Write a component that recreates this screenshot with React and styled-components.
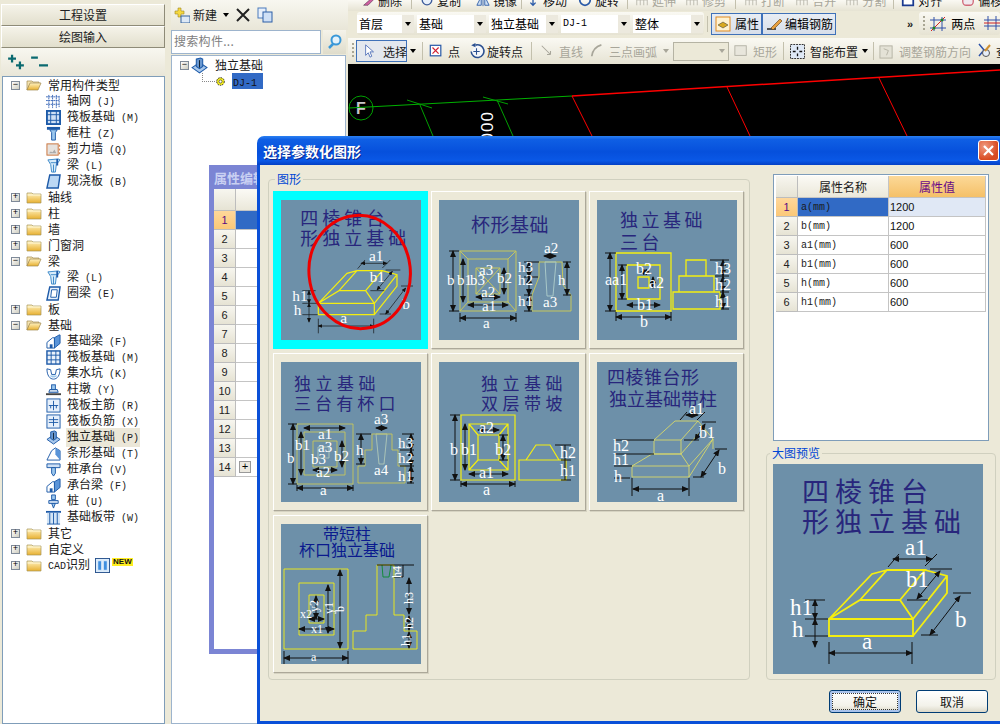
import React from "react";
import styled, { createGlobalStyle, css } from "styled-components";

const GlobalStyle = createGlobalStyle`
  html, body { margin: 0; padding: 0; background: #ece9d8; }
  body { font: 12px "Noto Sans CJK SC", "Liberation Sans", sans-serif; color: #000; }
  * { box-sizing: border-box; }
`;

const Hw = styled.span`
  font-family: "Liberation Mono", monospace;
  font-size: 10px;
`;

// half width latin like the bitmap font of the old app
const sim = (s) =>
  s.split(/([\x20-\x7e]+)/).map((p, i) =>
    /[\x20-\x7e]/.test(p) ? <Hw key={i}>{p}</Hw> : p
  );

const Page = styled.div`
  position: relative;
  display: flex;
  width: 1000px;
  height: 724px;
  overflow: hidden;
  background: #ece9d8;
`;

/* ---------- left side panel ---------- */

const SidePanel = styled.div`
  width: 165px;
  padding: 4px 0 0 1px;
  display: flex;
  flex-direction: column;
  flex: none;
`;

const NavButton = styled.div`
  width: 164px;
  height: 22px;
  display: flex;
  align-items: center;
  justify-content: center;
  padding-bottom: 2px;
  color: #222;
  border: 1px solid;
  border-color: #fff #8e8b78 #8e8b78 #fff;
  background: linear-gradient(#f5f3e9, #e2dfcd);
`;

const TreeTools = styled.div`
  height: 28px;
  display: flex;
  align-items: center;
  gap: 5px;
  padding-left: 6px;
  background: linear-gradient(#f8f7f0, #e9e6d8);
`;

const TreeBox = styled.div`
  width: 163px;
  margin-left: 1px;
  flex: 1;
  background: #fff;
  border: 1px solid #7f9db9;
`;

const dotV = (x, y, h) =>
  `repeating-linear-gradient(to bottom, #999 0 1px, transparent 1px 2px) ${x}px ${y}px / 1px ${h} no-repeat`;
const dotH = (x, w) =>
  `repeating-linear-gradient(to right, #999 0 1px, transparent 1px 2px) ${x}px 8px / ${w}px 1px no-repeat`;

const TreeRow = styled.div`
  height: 16px;
  display: flex;
  align-items: center;
  white-space: nowrap;
  padding-left: ${(p) => (p.$child ? 43 : 8)}px;
  background: ${(p) =>
    [
      p.$first
        ? dotV(12, "8px", "8px")
        : p.$end
        ? dotV(12, "0px", "8px")
        : dotV(12, "0px", "100%"),
      p.$child
        ? p.$lastChild
          ? dotV(31, "0px", "8px")
          : dotV(31, "0px", "100%")
        : null,
      p.$child ? dotH(31, 12) : dotH(12, 11),
    ]
      .filter(Boolean)
      .join(",")};
`;

const Expander = styled.span`
  width: 9px;
  height: 9px;
  flex: none;
  margin-right: ${(p) => p.$mr ?? 6}px;
  border: 1px solid #7f8a99;
  background: linear-gradient(135deg, #fff, #cfcdbf);
  display: flex;
  align-items: center;
  justify-content: center;
  font: 9px/7px "Liberation Mono", monospace;
  color: #000;
`;

const TreeLabel = styled.span`
  margin-left: ${(p) => p.$gap ?? 5}px;
  padding: 0 1px;
  background: ${(p) => (p.$active ? "#ebe7d8" : "transparent")};
  color: #1a1a1a;
  line-height: 16px;
`;

const CadMark = styled.span`
  margin-left: 4px;
  display: flex;
`;

const NewBadge = styled.span`
  font: bold 8px/8px "Liberation Sans", sans-serif;
  background: #ffee20;
  color: #111;
  padding: 0 1px;
  align-self: flex-start;
  margin-left: 2px;
  margin-top: 1px;
`;

const IconSvg = styled.svg`
  flex: none;
`;

const Icon = ({ children, size = 16, vb = 16 }) => (
  <IconSvg width={size} height={size} viewBox={`0 0 ${vb} ${vb}`}>
    {children}
  </IconSvg>
);

const Folder = ({ open }) => (
  <Icon>
    <defs>
      <linearGradient id="fld" x1="0" y1="0" x2="0" y2="1">
        <stop offset="0" stopColor="#fff2c0" />
        <stop offset="1" stopColor="#e8b030" />
      </linearGradient>
    </defs>
    {open ? (
      <>
        <path d="M1 4h5l1 1h6v2H4L1 13z" fill="#f4e3b0" stroke="#a08a50" strokeWidth=".7" />
        <path d="M1 13l3-7h11l-3 7z" fill="url(#fld)" stroke="#a08a50" strokeWidth=".7" />
      </>
    ) : (
      <>
        <path d="M1 4h5l1 1h8v9H1z" fill="url(#fld)" stroke="#a8955a" strokeWidth=".7" />
        <path d="M1.5 6h13" stroke="#fff8d8" />
      </>
    )}
  </Icon>
);

const B = "#1d5aa8";
const L = "#9cc8ee";
const treeIcons = {
  grid: (
    <path d="M3 1v14M7 1v14M11 1v14M0 3h14M0 7h14M0 11h14M14 2v12" stroke="#3a68b8" fill="none" strokeDasharray="2 .6" />
  ),
  raft: (
    <>
      <rect x="1" y="1" width="14" height="14" fill="#cfe0f4" stroke={B} strokeWidth="2" />
      <path d="M5 1v14M11 1v14M1 5h14M1 11h14" stroke={B} />
    </>
  ),
  column: (
    <>
      <rect x="1" y="1" width="14" height="3" fill={B} />
      <path d="M4 4h8l-2 3v8H6V7z" fill={L} stroke={B} />
    </>
  ),
  wall: (
    <>
      <rect x="1" y="2" width="12" height="12" fill="#e6e2de" stroke="#c87038" />
      <path d="M3 12l2-2 2 1 2-3 2 4z" fill="#aaa" />
      <path d="M14.500 3v11" stroke="#c87038" strokeDasharray="2 2" />
    </>
  ),
  beam: (
    <>
      <path d="M2 2l11-1 2 1-4 5-1 8H6L5 7z" fill="#d8ecfa" stroke="#3a88c8" />
      <path d="M5 5h7M8 7v8" stroke="#3a88c8" />
      <path d="M12 1v7" stroke={B} strokeWidth="2" />
    </>
  ),
  slab: (
    <path d="M4 1h11l-2 14H1z" fill="#bcd8f4" stroke={B} strokeWidth="1.500" />
  ),
  ring: (
    <>
      <path d="M4 1h11l-2 14H1z" fill="#eaf3fc" stroke={B} strokeWidth="1.500" />
      <path d="M6 4h6l-1 8H5z" fill="#fff" stroke={B} />
    </>
  ),
  footbeam: (
    <>
      <path d="M1 15V9l6-5h2v11z" fill="#fff" stroke={B} />
      <path d="M9 4l5-3h1v9l-6 5z" fill="#5a94d8" stroke={B} />
      <path d="M4 15v-4h3v4" fill={B} />
    </>
  ),
  raft2: (
    <>
      <rect x="1" y="1" width="14" height="14" fill="#eaf2fb" stroke={B} strokeWidth="1.500" />
      <path d="M5.500 1v14M10.500 1v14M1 5.500h14M1 10.500h14" stroke={B} />
    </>
  ),
  pit: (
    <>
      <path d="M1 3l4 1 1 5h4l1-5 4-1M1 3c0 7 3 11 7 11s7-4 7-11" fill="none" stroke={B} />
      <path d="M4 10c2 3 6 3 8 0z" fill={L} />
    </>
  ),
  pier: (
    <>
      <rect x="6" y="3" width="4" height="5" fill={L} stroke={B} />
      <path d="M4 8h8l1 3H3z" fill="#c8d8ea" stroke={B} />
      <path d="M0 13h16" stroke="#444" strokeWidth="2" />
    </>
  ),
  main: (
    <>
      <rect x="1" y="1" width="14" height="14" fill="#e6f0fb" stroke={B} />
      <path d="M8 3v10M3 8h10M5 8v3M11 8v3" stroke={B} />
    </>
  ),
  neg: (
    <>
      <rect x="1" y="1" width="14" height="14" fill="#e6f0fb" stroke={B} />
      <path d="M3 6h10M3 9h10M8 3v10" stroke={B} />
    </>
  ),
  iso: (
    <>
      <path d="M1 10l6-4h2l6 4-7 5z" fill="#a8c8ec" stroke={B} />
      <path d="M5 2l4-1 2 1v7l-3 2-3-2z" fill="#6a98d0" stroke={B} />
      <path d="M8 3v7" stroke="#123" />
    </>
  ),
  strip: (
    <>
      <path d="M1 15l5-10 4-3 5 3v10z" fill="#fff" stroke={B} />
      <path d="M10 2l5 3v10l-5-6z" fill="#5a94d8" />
    </>
  ),
  cap: (
    <>
      <path d="M1 2h14v4H1z" fill="#cfe0f4" stroke={B} />
      <path d="M6 6h4v6l-2 3-2-3z" fill={L} stroke={B} />
    </>
  ),
  pile: (
    <>
      <path d="M6 1h4v5H6zM6 10h4l-2 5z" fill={L} stroke={B} />
      <path d="M3 7h10v3H3z" fill="#cfe0f4" stroke={B} />
    </>
  ),
  band: (
    <>
      <path d="M0 2h16" stroke={B} strokeWidth="2" />
      <path d="M1 3h14v12H1z" fill="#d2e4f6" />
      <path d="M4 3v12M8 3v12M12 3v12M1 15h14" stroke={B} />
    </>
  ),
};

const leaf = (label, icon, active) => ({ label, icon, active });
const tree = [
  {
    label: "常用构件类型",
    open: true,
    kids: [
      leaf("轴网 (J)", "grid"),
      leaf("筏板基础 (M)", "raft"),
      leaf("框柱 (Z)", "column"),
      leaf("剪力墙 (Q)", "wall"),
      leaf("梁 (L)", "beam"),
      leaf("现浇板 (B)", "slab"),
    ],
  },
  { label: "轴线" },
  { label: "柱" },
  { label: "墙" },
  { label: "门窗洞" },
  { label: "梁", open: true, kids: [leaf("梁 (L)", "beam"), leaf("圈梁 (E)", "ring")] },
  { label: "板" },
  {
    label: "基础",
    open: true,
    kids: [
      leaf("基础梁 (F)", "footbeam"),
      leaf("筏板基础 (M)", "raft2"),
      leaf("集水坑 (K)", "pit"),
      leaf("柱墩 (Y)", "pier"),
      leaf("筏板主筋 (R)", "main"),
      leaf("筏板负筋 (X)", "neg"),
      leaf("独立基础 (P)", "iso", true),
      leaf("条形基础 (T)", "strip"),
      leaf("桩承台 (V)", "cap"),
      leaf("承台梁 (F)", "footbeam"),
      leaf("桩 (U)", "pile"),
      leaf("基础板带 (W)", "band"),
    ],
  },
  { label: "其它" },
  { label: "自定义" },
  { label: "CAD识别", cad: true },
];

const SideTree = () => (
  <TreeBox>
    {tree.map((n, i) => (
      <React.Fragment key={i}>
        <TreeRow $first={i === 0} $end={i === tree.length - 1}>
          <Expander>{n.open ? "−" : "+"}</Expander>
          <Folder open={n.open} />
          <TreeLabel>{sim(n.label)}</TreeLabel>
          {n.cad && (
            <>
              <CadMark>
                <Icon size={15}>
                  <rect x=".5" y=".5" width="15" height="15" fill="#dcecfb" stroke="#27508c" />
                  <path d="M3 3h4v10H3zM9 3h4v10H9z" fill="#3f8fe0" stroke="#fff" strokeWidth=".6" />
                </Icon>
              </CadMark>
              <NewBadge>NEW</NewBadge>
            </>
          )}
        </TreeRow>
        {n.kids &&
          n.kids.map((k, j) => (
            <TreeRow key={j} $child $lastChild={j === n.kids.length - 1}>
              <Icon size={15}>{treeIcons[k.icon]}</Icon>
              <TreeLabel $active={k.active}>{sim(k.label)}</TreeLabel>
            </TreeRow>
          ))}
      </React.Fragment>
    ))}
  </TreeBox>
);

/* ---------- component list panel ---------- */

const ListPanel = styled.div`
  width: 183px;
  flex: none;
  padding-left: 6px;
  display: flex;
  flex-direction: column;
  background: #ece9d8;
`;

const ListTools = styled.div`
  height: 30px;
  padding: 0 0 1px 3px;
  display: flex;
  align-items: center;
  background: linear-gradient(#f8f7f0, #e9e6d8);
`;

const SearchRow = styled.div`
  height: 25px;
  display: flex;
  width: 175px;
  gap: 2px;
`;

const SearchInput = styled.div`
  width: 150px;
  height: 24px;
  padding: 0 0 3px 2px;
  display: flex;
  align-items: center;
  color: #808080;
  letter-spacing: 0.3px;
  background: #fff;
  border: 1px solid #9db4cd;
`;

const SearchButton = styled.div`
  width: 23px;
  height: 24px;
  display: flex;
  align-items: center;
  justify-content: center;
  background: linear-gradient(#f5f3ea, #dfdccb);
`;

const ListTree = styled.div`
  flex: 1;
  width: 175px;
  background: #fff;
  border: 1px solid #9db4cd;
  padding: 1px 0 0 8px;
`;

const ListRow = styled.div`
  height: 16px;
  display: flex;
  align-items: center;
  white-space: nowrap;
`;

const Selected = styled.span`
  display: inline-block;
  height: 16px;
  width: 31px;
  margin-left: 6px;
  line-height: 15px;
  padding-left: 1px;
  background: #316ac5;
  color: #111;
`;

const Connector = styled.span`
  width: 13px;
  height: 9px;
  margin-left: 22px;
  margin-top: -8px;
  border-left: 1px dotted #888;
  border-bottom: 1px dotted #888;
`;

/* ---------- workspace ---------- */

const Workspace = styled.div`
  flex: 1;
  min-width: 0;
  display: flex;
  flex-direction: column;
`;

const barBg = css`
  background: linear-gradient(#faf9f3, #e6e3d3);
`;

const CutBar = styled.div`
  height: 11px;
  overflow: hidden;
  flex: none;
  ${barBg};
`;

const CutInner = styled.div`
  margin-top: -12px;
  height: 24px;
  display: flex;
  align-items: center;
  white-space: nowrap;
  padding-left: 13px;
`;

const CutTool = styled.span`
  display: flex;
  align-items: center;
  gap: 3px;
  flex: none;
  margin-right: ${(p) => p.$mr ?? 0}px;
  color: ${(p) => (p.$off ? "#a8a69a" : "#111")};
`;

const Sep = styled.span`
  width: 1px;
  height: ${(p) => p.$h ?? 18}px;
  flex: none;
  background: #c3c0ad;
  margin: 0 ${(p) => p.$m ?? 6}px;
`;

const ComboBar = styled.div`
  height: 27px;
  flex: none;
  display: flex;
  align-items: center;
  padding: 0 0 2px 9px;
`;

const ComboGroup = styled.div`
  height: 23px;
  width: 347px;
  flex: none;
  display: flex;
  align-items: center;
  gap: 3px;
  border-radius: 3px;
  ${barBg};
`;

const Combo = styled.div`
  width: ${(p) => p.$w}px;
  height: 18px;
  flex: none;
  display: flex;
  align-items: center;
  justify-content: space-between;
  padding-left: 2px;
  background: #fff;
  ${(p) =>
    p.$off &&
    css`
      height: 19px;
      margin-left: 4px;
      background: #ece9d8;
      border: 1px solid #b5b3a3;
    `}
`;

const ComboArrow = styled.span`
  width: 12px;
  height: 100%;
  display: flex;
  align-items: center;
  justify-content: center;
  background: ${(p) => (p.$off ? "transparent" : "#ece9de")};
`;

const Caret = styled.span`
  display: inline-block;
  width: 0;
  height: 0;
  flex: none;
  border: 3px solid transparent;
  border-bottom: 0;
  border-top: 4px solid ${(p) => (p.$off ? "#a8a69a" : "#000")};
`;

const ToggleButton = styled.div`
  height: 22px;
  width: ${(p) => p.$w}px;
  flex: none;
  display: flex;
  align-items: center;
  gap: ${(p) => p.$gap ?? 4}px;
  padding-left: 3px;
  white-space: nowrap;
  border: 1px solid #3f71b8;
  background: linear-gradient(#e8edf4, #d7deea);
`;

const Chevrons = styled.span`
  flex: none;
  margin-left: 71px;
  font: bold 11px "Liberation Sans", sans-serif;
  color: #1a1a1a;
`;

const EndGroup = styled.div`
  height: 23px;
  margin-left: 6px;
  flex: 1;
  display: flex;
  align-items: center;
  gap: 5px;
  padding-left: 4px;
  overflow: hidden;
  white-space: nowrap;
  border-radius: 3px;
  ${barBg};
`;

const EndTool = styled.span`
  margin-left: 4px;
  display: flex;
  gap: 4px;
`;

const Grip = styled.span`
  width: 2px;
  height: 16px;
  flex: none;
  background: repeating-linear-gradient(to bottom, #a9a694 0 2px, transparent 2px 4px);
`;

const ToolBar = styled.div`
  height: 26px;
  flex: none;
  display: flex;
  align-items: center;
  padding-left: 4px;
  white-space: nowrap;
  overflow: hidden;
  ${barBg};
`;

const Tool = styled.span`
  display: flex;
  align-items: center;
  gap: ${(p) => p.$gap ?? 5}px;
  flex: none;
  margin-left: ${(p) => p.$ml ?? 0}px;
  color: ${(p) => (p.$off ? "#a8a69a" : "#1a1a1a")};
`;

const PickButton = styled(Tool)`
  width: 51px;
  height: 22px;
  padding-left: 6px;
  gap: 6px;
  border: 1px solid #3f71b8;
  background: #e4e8ee;
`;

const CanvasArea = styled.div`
  flex: 1;
  background: #000;
`;

const CanvasSvg = styled.svg`
  display: block;
`;

const Canvas = () => (
  <CanvasArea>
    <CanvasSvg width="652" height="80">
      <circle cx="13" cy="44" r="12" fill="none" stroke="#00a000" />
      <text x="8" y="50" fill="#c8c8c8" fontFamily="Liberation Sans" fontWeight="bold" fontSize="16">F</text>
      <path d="M1 44 L224 32" stroke="#00b000" fill="none" />
      <path d="M59 36 L84 44 M72 41 L85 72 M135 33 L160 40 M149 36 L165 72" stroke="#00a000" fill="none" />
      <path d="M224 32 L652 6" stroke="#ff0000" strokeWidth="1.500" fill="none" />
      <path d="M224 32 L244 72 M379 23 L402 72 M531 14 L559 72" stroke="#ff0000" fill="none" />
      <text x="0" y="0" transform="translate(133,48) rotate(90)" fill="#fff" fontFamily="Liberation Sans" fontSize="17" letterSpacing="1">000</text>
    </CanvasSvg>
  </CanvasArea>
);

/* ---------- property window behind the dialog ---------- */

const PropWindow = styled.div`
  position: absolute;
  left: 209px;
  top: 165px;
  width: 80px;
  height: 489px;
  padding: 0 0 5px 5px;
  display: flex;
  flex-direction: column;
  background: #7b85d4;
`;

const PropTitle = styled.div`
  height: 24px;
  display: flex;
  align-items: center;
  font-weight: bold;
  font-size: 13px;
  color: #c9d0f2;
  white-space: nowrap;
`;

const PropBody = styled.div`
  flex: 1;
  background: #fff;
`;

const RowHead = styled.div`
  width: 22px;
  flex: none;
  display: flex;
  align-items: center;
  justify-content: center;
  font-family: "Liberation Sans", sans-serif;
  font-size: 11px;
  color: ${(p) => (p.$on ? "#5a0a80" : "#222")};
  background: ${(p) =>
    p.$on ? "linear-gradient(#ffd79a, #fbc878)" : "linear-gradient(#f7f6ef, #e6e3d4)"};
  border-right: 1px solid #bdbdbd;
  border-bottom: 1px solid #bdbdbd;
`;

const GridRow = styled.div`
  height: ${(p) => p.$h ?? 19}px;
  display: flex;
`;

const PropCell = styled.div`
  flex: 1;
  display: flex;
  align-items: center;
  padding-left: 3px;
  background: ${(p) => (p.$on ? "#316ac5" : p.$head ? "linear-gradient(#fbfaf5, #ebe8da)" : "#fff")};
  border-bottom: 1px solid #c4c4c4;
`;

const PlusBox = styled.span`
  width: 12px;
  height: 12px;
  display: flex;
  align-items: center;
  justify-content: center;
  font: 11px/11px "Liberation Mono", monospace;
  background: #ece9e0;
  border: 1px solid #999;
`;

/* ---------- dialog ---------- */

const Dialog = styled.div`
  position: absolute;
  left: 257px;
  top: 136px;
  width: 746px;
  height: 588px;
  display: flex;
  flex-direction: column;
  border-radius: 7px 0 0 0;
  overflow: hidden;
`;

const DialogTitle = styled.div`
  height: 29px;
  flex: none;
  display: flex;
  align-items: center;
  justify-content: space-between;
  padding: 0 4px 0 6px;
  font-weight: bold;
  font-size: 14px;
  color: #fff;
  text-shadow: 1px 1px 0 #0a2a90;
  background: linear-gradient(#2b80f2 0, #0f5fe4 12%, #0650dc 55%, #0a58e6 85%, #0440c4 100%);
`;

const CloseButton = styled.div`
  width: 21px;
  height: 21px;
  display: flex;
  align-items: center;
  justify-content: center;
  border: 1px solid #fff;
  border-radius: 3px;
  background: radial-gradient(circle at 30% 30%, #f09a80, #d84a20 70%);
`;

const DialogBody = styled.div`
  flex: 1;
  min-height: 0;
  display: flex;
  padding: 8px 0 0 8px;
  background: #ece9d8;
  border: 3px solid #0a50d8;
  border-top: 0;
`;

const Group = styled.fieldset`
  margin: 0;
  padding: ${(p) => p.$pad};
  width: ${(p) => p.$w}px;
  height: ${(p) => p.$h}px;
  flex: none;
  border: 1px solid #d0d0bf;
  border-radius: 4px;
  min-width: 0;
`;

const GroupLegend = styled.legend`
  padding: 0 2px;
  margin-left: ${(p) => p.$ml}px;
  line-height: 12px;
  font-size: 12px;
  color: #0046d5;
`;

const ThumbGrid = styled.div`
  display: grid;
  grid-template-columns: repeat(3, 155px);
  grid-auto-rows: 158px;
  gap: 4px 3px;
`;

const Thumb = styled.div`
  display: flex;
  align-items: center;
  justify-content: center;
  background: ${(p) => (p.$on ? "#00ffff" : "#ece9d8")};
  ${(p) =>
    !p.$on &&
    css`
      border: 1px solid;
      border-color: #fff #aca899 #aca899 #fff;
      box-shadow: 1px 1px 0 #d6d3c2;
    `}
`;

const Shot = styled.svg`
  display: block;
  flex: none;
  background: #6d90a9;
  overflow: hidden;
`;

const SideColumn = styled.div`
  margin-left: 16px;
  width: 230px;
  flex: none;
  display: flex;
  flex-direction: column;
`;

const AttrBox = styled.div`
  margin: 1px 0 6px 7px;
  width: 216px;
  height: 267px;
  padding: 1px 2px;
  background: #fff;
  border: 1px solid #7f9db9;
`;

const AttrName = styled.div`
  width: 91px;
  flex: none;
  display: flex;
  align-items: center;
  justify-content: ${(p) => (p.$head ? "center" : "flex-start")};
  padding-left: ${(p) => (p.$head ? 0 : 3)}px;
  color: #1a1a1a;
  background: ${(p) =>
    p.$on ? "#316ac5" : p.$head ? "linear-gradient(#fbfaf5, #ebe8da)" : "#fff"};
  border-right: 1px solid #c4c4c4;
  border-bottom: 1px solid #c4c4c4;
`;

const AttrValue = styled.div`
  flex: 1;
  display: flex;
  align-items: center;
  justify-content: ${(p) => (p.$head ? "center" : "flex-start")};
  padding-left: ${(p) => (p.$head ? 0 : 1)}px;
  font-family: ${(p) => (p.$head ? "inherit" : '"Liberation Sans", sans-serif')};
  font-size: ${(p) => (p.$head ? 12 : 11)}px;
  color: ${(p) => (p.$head ? "#6a0a88" : "#111")};
  background: ${(p) =>
    p.$head ? "linear-gradient(#fcd998, #f5c068)" : p.$on ? "#e0e8f5" : "#fff"};
  border-right: 1px solid #c4c4c4;
  border-bottom: 1px solid #c4c4c4;
`;

const Footer = styled.div`
  display: flex;
  justify-content: flex-end;
  gap: 15px;
  padding-right: 8px;
  margin-top: 10px;
`;

const PushButton = styled.div`
  width: 72px;
  height: 23px;
  display: flex;
  align-items: center;
  justify-content: center;
  border: 1px solid #003c74;
  border-radius: 3px;
  color: #111;
  background: linear-gradient(#fff, #f3f2ea 70%, #dcd8c8);
  ${(p) =>
    p.$def &&
    css`
      box-shadow: inset 0 0 0 2px #a9c3ec;
      outline: 1px dotted #333;
      outline-offset: -4px;
    `}
`;

/* ---------- diagrams ---------- */

const Y = "#f4ee10";
const O = "#c6c65c";

const preview = {
  vb: 210,
  titles: [
    { t: "四棱锥台", x: 29, y: 38, s: 27, ls: 6 },
    { t: "形独立基础", x: 29, y: 68, s: 27, ls: 6 },
  ],
  sw: 1.8,
  shapes: [
    [Y, "M56 155H140V172H56Z M56 155L87 136H127L140 155 M87 136L114 106H152L127 136 M56 155L99 110L114 106 M140 172L174 129V112L152 106 M140 155L174 112"],
  ],
  dims: [
    [120, 95, 159, 95],
    [167, 107, 144, 135],
    [187, 132, 157, 171],
    [42, 136, 42, 155],
    [42, 155, 42, 183],
    [56, 189, 139, 189],
  ],
  ticks: "M115 103L126 90 M152 102L164 90 M157 105H179 M134 136H155 M180 129H198 M148 171H165 M32 136H52 M32 155H55 M32 172H55 M56 178V200 M139 178V200",
  labels: [
    ["a1", 132, 91],
    ["b1", 133, 123],
    ["b", 182, 163],
    ["h1", 17, 151],
    ["h", 19, 173],
    ["a", 89, 185],
  ],
  ls: 23,
};

const cup = {
  vb: 140,
  titles: [{ t: "杯形基础", x: 32, y: 32, s: 19, ls: 0.5 }],
  shapes: [
    [O, "M21 51H77V111H21Z M29 59H69V102H29Z M37 68H61V94H37Z M21 51L29 59 M77 51L69 59 M21 111L29 102 M77 111L69 102 M37 68L61 94 M61 68L37 94"],
    [O, "M100 62H123L124 85L132 95V111H93V95L100 77Z"],
    ["#a8c8c8", "M106 62H117L114 96H108Z"],
  ],
  dims: [[14, 51, 14, 111], [24, 59, 24, 102], [65, 68, 65, 94], [21, 118, 77, 118], [29, 105, 69, 105], [37, 97, 61, 97], [105, 56, 117, 56], [90, 62, 90, 77], [90, 77, 90, 95], [90, 95, 90, 111], [128, 62, 128, 95]],
  ticks: "M10 51H20 M10 111H20 M85 62H100 M85 77H99 M85 95H93 M85 111H93 M124 62H132 M124 95H132 M21 113V122 M77 113V122",
  labels: [["a2", 105, 53], ["h3", 79, 72], ["h2", 79, 85], ["h1", 79, 106], ["h", 119, 85], ["a3", 104, 107], ["a", 44, 128], ["a1", 43, 111], ["a2", 42, 97], ["a3", 40, 75], ["b", 8, 85], ["b1", 18, 85], ["b3", 31, 85], ["b2", 58, 83]],
  ls: 15,
};

const triple = {
  vb: 140,
  titles: [
    { t: "独立基础", x: 23, y: 27, s: 18, ls: 3.500 },
    { t: "三台", x: 23, y: 49, s: 18, ls: 3.500 },
  ],
  sw: 1.3,
  shapes: [[Y, "M19 53H74V111H19Z M30 65H63V99H30Z M41 77H52V88H41Z M89 60H109V76H89Z M82 76H117V92H82Z M76 92H123V109H76Z"]],
  dims: [[13, 53, 13, 111], [25, 65, 25, 99], [30, 105, 63, 105], [19, 117, 74, 117], [44, 72, 52, 72], [56, 77, 56, 88], [126, 60, 126, 76], [126, 76, 126, 92], [126, 92, 126, 109]],
  ticks: "M8 53H19 M8 111H19 M21 65H30 M21 99H30 M19 112V121 M74 112V121 M113 60H132 M118 76H132 M123 92H132 M124 109H132",
  labels: [["aa1", 8, 85], ["b2", 39, 74], ["a2", 52, 88], ["b1", 40, 110], ["b", 43, 127], ["h3", 118, 74], ["h2", 118, 90], ["h1", 118, 107]],
  ls: 16,
};

const tripleCup = {
  vb: 140,
  titles: [
    { t: "独立基础", x: 13, y: 28, s: 17, ls: 4.500 },
    { t: "三台有杯口", x: 13, y: 48, s: 17, ls: 4.100 },
  ],
  sw: 0.9,
  shapes: [
    [O, "M16 62H72V122H16Z M23 70H64V113H23Z M32 79H56V105H32Z"],
    ["#b0c8b8", "M37 85H48V96H37Z M95 72H106L103 102H98Z"],
    [O, "M91 72H111V88H117V104H124V121H77V104H84V88H91Z"],
  ],
  dims: [[12, 62, 12, 122], [20, 70, 20, 113], [61, 79, 61, 105], [23, 66, 64, 66], [32, 108, 56, 108], [16, 126, 72, 126], [95, 66, 106, 66], [80, 72, 80, 102], [130, 72, 130, 88], [130, 88, 130, 104], [130, 104, 130, 121]],
  ticks: "M7 62H16 M7 122H16 M75 72H90 M75 102H84 M121 72H133 M119 88H133 M119 104H133 M126 121H133 M16 123V129 M72 123V129",
  labels: [["b1", 14, 88], ["b", 6, 101], ["a1", 37, 77], ["a3", 37, 90], ["b3", 30, 102], ["b2", 53, 99], ["a2", 35, 115], ["a", 39, 133], ["a3", 93, 62], ["h", 75, 93], ["a4", 93, 113], ["h3", 117, 86], ["h2", 117, 101], ["h1", 117, 119]],
  ls: 15,
};

const doubleSlope = {
  vb: 140,
  titles: [
    { t: "独立基础", x: 42, y: 28, s: 17, ls: 4.500 },
    { t: "双层带坡", x: 42, y: 48, s: 17, ls: 4.500 },
  ],
  sw: 1.2,
  shapes: [[Y, "M22 53H76V118H22Z M30 62H69V108H30Z M39 73H60V98H39Z M30 62L39 73 M69 62L60 73 M30 108L39 98 M69 108L60 98 M80 98H127V118H80Z M87 98L97 83H111L120 98"]],
  dims: [[16, 53, 16, 118], [26, 62, 26, 108], [64, 73, 64, 98], [39, 68, 60, 68], [30, 112, 69, 112], [22, 122, 76, 122]],
  ticks: "M11 53H21 M11 118H21 M60 73H69 M60 98H69 M22 119V125 M76 119V125 M116 83H132 M122 98H132 M122 118H132 M126 83V118",
  labels: [["b", 11, 93], ["b1", 22, 93], ["a2", 40, 71], ["b2", 56, 93], ["a1", 40, 116], ["a", 44, 133], ["h2", 121, 96], ["h1", 121, 114]],
  ls: 16,
};

const pedestal = {
  vb: 140,
  titles: [
    { t: "四棱锥台形", x: 10, y: 22, s: 18, ls: 0.500 },
    { t: "独立基础带柱", x: 12, y: 44, s: 18, ls: 0 },
  ],
  sw: 0.9,
  shapes: [["#d8d86a", "M35 104H92V115H35Z M57 78H84V92H57Z M57 78L78 59H101L84 78 M35 104L55 92H84L92 104 M92 115L116 77L101 59 M92 104L116 77V87 M84 92L103 70"]],
  dims: [[89, 53, 101, 53], [108, 62, 98, 78], [122, 88, 104, 115], [36, 127, 91, 127]],
  ticks: "M83 58L90 50 M100 58L108 50 M105 60H119 M87 78H102 M118 87H130 M96 115H107 M35 116V134 M92 116V134 M17 78H57 M17 92H57 M17 104H35 M17 116H33",
  labels: [["a1", 92, 52], ["b1", 102, 76], ["b", 121, 112], ["h2", 16, 89], ["h1", 16, 103], ["h", 17, 120], ["a", 60, 139]],
  ls: 16,
};

const shortCol = {
  vb: 140,
  titles: [
    { t: "带短柱", x: 42, y: 16, s: 16, ls: 0, c: "#0a1a8e" },
    { t: "杯口独立基础", x: 18, y: 32, s: 16, ls: 0, c: "#0a1a8e" },
  ],
  sw: 0.9,
  shapes: [
    [Y, "M3 45H67V125H3Z M18 59H53V111H18Z M28 71H43V99H28Z M72 107H85V91H96V41H113V91H123V107H136V125H72Z"],
    ["#0a8a30", "M101 41L102 53H108L110 41"],
  ],
  dims: [[59, 46, 59, 124], [47, 61, 47, 109], [35, 72, 35, 95], [3, 134, 67, 134], [18, 105, 53, 105], [28, 95, 43, 95], [128, 54, 128, 90], [128, 92, 128, 106], [128, 108, 128, 124]],
  ticks: "M3 127V140 M67 127V140 M96 41H133 M113 53H122 M122 41V53",
  labels: [["a", 30, 137], ["x1", 30, 109], ["x2", 19, 94], ["y2", 37, 88, 0, -90], ["y1", 52, 90, 0, -90], ["b", 63, 88, 0, -90], ["h4", 120, 54, 0, -90], ["h3", 132, 80, 0, -90], ["h2", 132, 105, 0, -90], ["h1", 129, 122, 0, -90]],
  ls: 12,
};

const Diagram = ({ data, size, children }) => (
  <Shot width={size} height={size} viewBox={`0 0 ${data.vb} ${data.vb}`}>
    <defs>
      <marker id="ah" markerUnits="userSpaceOnUse" markerWidth="7" markerHeight="6" refX="6" refY="3" orient="auto-start-reverse">
        <path d="M0 0L7 3L0 6Z" fill="#111" />
      </marker>
    </defs>
    {data.titles.map((t, i) => (
      <text key={i} x={t.x} y={t.y} fontSize={t.s} letterSpacing={t.ls} fill={t.c || "#28267c"} fontFamily='"Noto Sans CJK SC", sans-serif'>
        {t.t}
      </text>
    ))}
    {data.shapes.map(([c, d], i) => (
      <path key={i} d={d} fill="none" stroke={c} strokeWidth={data.sw || 1} />
    ))}
    <path d={data.ticks} fill="none" stroke="#111" strokeWidth="1" />
    {data.dims.map(([a, b, c, d], i) => (
      <line key={i} x1={a} y1={b} x2={c} y2={d} stroke="#111" strokeWidth="1" markerStart="url(#ah)" markerEnd="url(#ah)" />
    ))}
    {data.labels.map(([t, x, y, s, r], i) => (
      <text key={i} x={x} y={y} fontSize={s || data.ls} fill="#fff" fontFamily='"Liberation Serif", serif' transform={r ? `rotate(${r} ${x} ${y})` : undefined}>
        {t}
      </text>
    ))}
    {children}
  </Shot>
);

const attrs = [
  ["a(mm)", "1200"],
  ["b(mm)", "1200"],
  ["a1(mm)", "600"],
  ["b1(mm)", "600"],
  ["h(mm)", "600"],
  ["h1(mm)", "600"],
];

const ChooseDialog = () => (
  <Dialog>
    <DialogTitle>
      选择参数化图形
      <CloseButton>
        <svg width="13" height="13" viewBox="0 0 13 13">
          <path d="M2 2L11 11M11 2L2 11" stroke="#fff" strokeWidth="2.200" />
        </svg>
      </CloseButton>
    </DialogTitle>
    <DialogBody>
      <Group $w={482} $h={507} $pad="6px 0 0 4px">
        <GroupLegend $ml={2}>图形</GroupLegend>
        <ThumbGrid>
          <Thumb $on>
            <Diagram data={preview} size={140}>
              <ellipse cx="118" cy="108" rx="76" ry="85" fill="none" stroke="#ee0000" strokeWidth="4.500" transform="rotate(-6 118 108)" />
            </Diagram>
          </Thumb>
          <Thumb><Diagram data={cup} size={140} /></Thumb>
          <Thumb><Diagram data={triple} size={140} /></Thumb>
          <Thumb><Diagram data={tripleCup} size={140} /></Thumb>
          <Thumb><Diagram data={doubleSlope} size={140} /></Thumb>
          <Thumb><Diagram data={pedestal} size={140} /></Thumb>
          <Thumb><Diagram data={shortCol} size={140} /></Thumb>
        </ThumbGrid>
      </Group>
      <SideColumn>
        <AttrBox>
          <GridRow $h={22}>
            <RowHead />
            <AttrName $head>属性名称</AttrName>
            <AttrValue $head>属性值</AttrValue>
          </GridRow>
          {attrs.map(([n, v], i) => (
            <GridRow key={n}>
              <RowHead $on={i === 0}>{i + 1}</RowHead>
              <AttrName $on={i === 0}>
                <Hw>{n}</Hw>
              </AttrName>
              <AttrValue $on={i === 0}>{v}</AttrValue>
            </GridRow>
          ))}
        </AttrBox>
        <Group $w={230} $h={233} $pad="5px 0 0 6px">
          <GroupLegend $ml={-3}>大图预览</GroupLegend>
          <Diagram data={preview} size={210} />
        </Group>
        <Footer>
          <PushButton $def>确定</PushButton>
          <PushButton>取消</PushButton>
        </Footer>
      </SideColumn>
    </DialogBody>
  </Dialog>
);

const cutIcons = {
  brush: <path d="M3 14l9-8 2 2-6 6z" fill="#d060a0" stroke="#402040" strokeWidth=".6" />,
  copy: <circle cx="8" cy="8" r="5.500" fill="#e8f0fa" stroke="#3a5a9a" strokeWidth="1.500" />,
  mirror: <path d="M1 14L6 4v10zM15 14L10 4v10zM8 2v13" fill="#cfe0f4" stroke="#2a5aa8" />,
  move: <path d="M8 1v13M5 11l3 3 3-3" fill="none" stroke="#2a5aa8" strokeWidth="1.500" />,
  rotate: <path d="M2 8a6 6 0 0 0 12 0" fill="none" stroke="#2a5aa8" strokeWidth="2" />,
  off: <path d="M2 14V8h12v6M6 8v6M10 8v6" fill="none" stroke="#b8b6aa" />,
  align: <path d="M2 2h12v12H2z" fill="#fff" stroke="#1a3a90" strokeWidth="2" />,
  offset: <rect x="2" y="1" width="12" height="13" rx="4" fill="#f0e8ee" stroke="#d06878" strokeWidth="1.500" />,
};

// text, icon, gap to the next tool, separator in that gap
const cutTools = [
  ["删除", "brush", 18, true],
  ["复制", "copy", 15],
  ["镜像", "mirror", 9, true],
  ["移动", "move", 11],
  ["旋转", "rotate", 16, true],
  ["延伸", "off", 9],
  ["修剪", "off", 18, true],
  ["打断", "off", 10],
  ["合并", "off", 9],
  ["分割", "off", 15, true],
  ["对齐", "align", 19],
  ["偏移", "offset", 0],
];

export default function App() {
  return (
    <Page>
      <GlobalStyle />
      <SidePanel>
        <NavButton>工程设置</NavButton>
        <NavButton>绘图输入</NavButton>
        <TreeTools>
          <Icon size={18}>
            <path d="M1 5h7M4.500 1.500v7M8 11h7M11.500 7.500v7" stroke="#0b6a70" strokeWidth="2" fill="none" />
          </Icon>
          <Icon size={18}>
            <path d="M1 4h6M8 11h8" stroke="#0b6a70" strokeWidth="2" fill="none" />
          </Icon>
        </TreeTools>
        <SideTree />
      </SidePanel>

      <ListPanel>
        <ListTools>
          <Icon size={16}>
            <path d="M1 4h3V1h3v3h3v3H7v3H4V7H1z" fill="#f5d840" stroke="#a08820" strokeWidth=".6" />
            <rect x="7" y="9" width="9" height="7" fill="#dce8f6" stroke="#33609c" />
          </Icon>
          <Tool $ml={3}>新建</Tool>
          <Tool $ml={6}><Caret /></Tool>
          <Tool $ml={7}>
            <Icon size={14} vb={14}>
              <path d="M1 1L13 13M13 1L1 13" stroke="#222" strokeWidth="2" />
            </Icon>
          </Tool>
          <Tool $ml={7}>
            <Icon size={16}>
              <rect x="1" y="1" width="8" height="10" fill="#e8f0fb" stroke="#4a7abc" />
              <rect x="6" y="5" width="9" height="10" fill="#cfe0f6" stroke="#2c5ea6" />
            </Icon>
          </Tool>
        </ListTools>
        <SearchRow>
          <SearchInput>搜索构件...</SearchInput>
          <SearchButton>
            <Icon size={16}>
              <circle cx="9" cy="6" r="4.500" fill="#e4f2fb" stroke="#3a98d8" strokeWidth="2" />
              <path d="M6 10L2 14" stroke="#3a98d8" strokeWidth="2.500" />
            </Icon>
          </SearchButton>
        </SearchRow>
        <ListTree>
          <ListRow>
            <Expander $mr={2}>−</Expander>
            <Icon size={17}>{treeIcons.iso}</Icon>
            <TreeLabel $gap={6}>独立基础</TreeLabel>
          </ListRow>
          <ListRow>
            <Connector />
            <Icon size={11} vb={11}>
              <circle cx="5.500" cy="5.500" r="3.800" fill="#f6ee20" stroke="#222" strokeDasharray="1.500 1" />
              <circle cx="5.500" cy="5.500" r="1.500" fill="#fff" stroke="#222" strokeWidth=".6" />
            </Icon>
            <Selected><Hw>DJ-1</Hw></Selected>
          </ListRow>
        </ListTree>
      </ListPanel>

      <Workspace>
        <CutBar>
          <CutInner>
            {cutTools.map(([t, ic, gap, sep]) => (
              <React.Fragment key={t}>
                <CutTool $off={ic === "off"} $mr={sep ? 0 : gap}>
                  <Icon size={14}>{cutIcons[ic]}</Icon>
                  {t}
                </CutTool>
                {sep && <Sep $m={(gap - 1) / 2} />}
              </React.Fragment>
            ))}
          </CutInner>
        </CutBar>

        <ComboBar>
          <ComboGroup>
            <Combo $w={57}>首层<ComboArrow><Caret /></ComboArrow></Combo>
            <Combo $w={69}>基础<ComboArrow><Caret /></ComboArrow></Combo>
            <Combo $w={69}>独立基础<ComboArrow><Caret /></ComboArrow></Combo>
            <Combo $w={69}><Hw>DJ-1</Hw><ComboArrow><Caret /></ComboArrow></Combo>
            <Combo $w={70}>整体<ComboArrow><Caret /></ComboArrow></Combo>
          </ComboGroup>
          <Sep $h={16} $m={3} />
          <ToggleButton $w={51}>
            <Icon size={16}>
              <rect x="1" y="1" width="14" height="14" fill="#fff2d0" stroke="#e08a20" />
              <path d="M3 9l5-3 5 3-5 3z" fill="#d8a820" stroke="#333" strokeWidth=".5" />
            </Icon>
            属性
          </ToggleButton>
          <ToggleButton $w={74} $gap={3}>
            <Icon size={16}>
              <path d="M1 13h9" stroke="#222" strokeWidth="1.500" />
              <path d="M5 12L14 3l2 2-9 9z" fill="#e8a040" stroke="#5a3a10" strokeWidth=".6" />
            </Icon>
            编辑钢筋
          </ToggleButton>
          <Chevrons>»</Chevrons>
          <EndGroup>
            <Grip />
            <Icon size={16}>
              <path d="M4 1v14M12 1v14M0 4h16M0 12h16" stroke="#3050a8" />
              <path d="M1 15L15 1" stroke="#d02020" />
              <circle cx="4" cy="12" r="1.500" fill="#208020" />
              <circle cx="12" cy="4" r="1.500" fill="#208020" />
            </Icon>
            两点
            <EndTool>
              <Icon size={16}>
                <path d="M4 1v14M12 1v14M0 5h16M0 11h16" stroke="#3050a8" />
                <path d="M0 8h16" stroke="#d02020" />
              </Icon>
              平
            </EndTool>
          </EndGroup>
        </ComboBar>

        <ToolBar>
          <Grip />
          <PickButton $ml={2}>
            <Icon size={14}>
              <path d="M3 1v12l3-3 2 5 2-1-2-5h4z" fill="#fff" stroke="#5070b8" />
            </Icon>
            选择
          </PickButton>
          <Tool $ml={3}><Caret /></Tool>
          <Sep $m={6} />
          <Tool>
            <Icon size={14}>
              <rect x="1.500" y="1.500" width="12" height="12" fill="#fff" stroke="#2a5aa8" strokeWidth="1.400" />
              <path d="M4 4l7 7M11 4l-7 7" stroke="#d02030" strokeWidth="1.300" />
            </Icon>
            点
          </Tool>
          <Tool $ml={8} $gap={2}>
            <Icon size={17}>
              <path d="M3 8a6 6 0 1 0 4-6" stroke="#2a4f90" strokeWidth="1.500" fill="#f4f6fa" />
              <path d="M8 5v6M5 8h6" stroke="#2a4f90" />
              <path d="M7 0v4L3 2z" fill="#2a4f90" />
            </Icon>
            旋转点
          </Tool>
          <Sep $m={8} />
          <Tool $off>
            <Icon size={14}>
              <path d="M2 2L12 12M12 12H8M12 12V8" stroke="#a8a69a" strokeWidth="1.200" fill="none" />
            </Icon>
            直线
          </Tool>
          <Tool $off $ml={7}>
            <Icon size={14}>
              <path d="M2 14C3 7 6 3 13 1" stroke="#a8a69a" strokeWidth="2" fill="none" />
            </Icon>
            三点画弧
          </Tool>
          <Tool $ml={6}><Caret $off /></Tool>
          <Combo $w={56} $off>
            <span />
            <ComboArrow $off><Caret $off /></ComboArrow>
          </Combo>
          <Tool $off $ml={5}>
            <Icon size={14}>
              <rect x="1" y="2" width="13" height="11" fill="#e8e6dc" stroke="#b0aea2" />
            </Icon>
            矩形
          </Tool>
          <Sep $m={6} />
          <Tool>
            <Icon size={15}>
              <rect x=".5" y=".5" width="15" height="15" fill="#dfe9f6" stroke="#222" strokeDasharray="2 1" />
              <path d="M8 3v3M8 10v3M3 8h3M10 8h3" stroke="#111" strokeWidth="1.400" />
            </Icon>
            智能布置
          </Tool>
          <Tool $ml={4}><Caret /></Tool>
          <Sep $m={5} />
          <Tool $off>
            <Icon size={15}>
              <rect x="1" y="2" width="13" height="13" fill="#e4e2d6" stroke="#b4b2a4" />
              <path d="M5 5l5 2-2 5" stroke="#b4b2a4" fill="none" />
            </Icon>
            调整钢筋方向
          </Tool>
          <Tool $ml={6} $gap={3}>
            <Icon size={16}>
              <path d="M2 1l5 6-5 6" stroke="#2a50a8" strokeWidth="1.500" fill="none" />
              <circle cx="9" cy="10" r="3.500" fill="#e6eef8" stroke="#555" />
              <path d="M13 2l-5 6" stroke="#d09030" strokeWidth="2" />
            </Icon>
            查
          </Tool>
        </ToolBar>
        <Canvas />
      </Workspace>

      <PropWindow>
        <PropTitle>属性编辑</PropTitle>
        <PropBody>
          <GridRow $h={22}>
            <RowHead />
            <PropCell $head />
          </GridRow>
          {Array.from({ length: 14 }, (_, i) => (
            <GridRow key={i}>
              <RowHead $on={i === 0}>{i + 1}</RowHead>
              <PropCell $on={i === 0}>
                {i === 13 && <PlusBox>+</PlusBox>}
              </PropCell>
            </GridRow>
          ))}
        </PropBody>
      </PropWindow>

      <ChooseDialog />
    </Page>
  );
}
